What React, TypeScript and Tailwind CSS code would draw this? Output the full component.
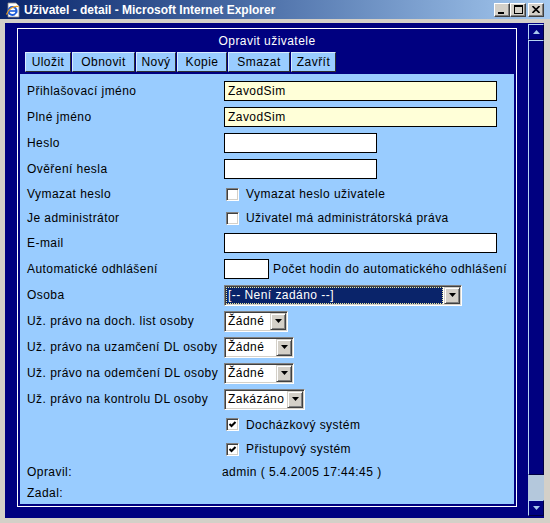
import React from "react";

function TextBox({ w, value, yellow = false }: { w: string; value?: string; yellow?: boolean }) {
  return (
    <div
      className={`${w} h-[20px] border border-black flex items-center pl-[3px] ${
        yellow ? "bg-[#ffffd8]" : "bg-white"
      }`}
    >
      {value}
    </div>
  );
}

function Check({ checked = false }: { checked?: boolean }) {
  return (
    <div className="ml-[2px] w-[13px] h-[13px] bg-white border border-t-[#808080] border-l-[#808080] border-r-white border-b-white shadow-[inset_1px_1px_0_#404040,inset_-1px_-1px_0_#d4d0c8] flex items-center justify-center shrink-0">
      {checked && (
        <svg width="9" height="9" viewBox="0 0 9 9">
          <path d="M1.5 4 L3.5 6 L7.5 2" fill="none" stroke="#000" strokeWidth="2" />
        </svg>
      )}
    </div>
  );
}

function DropButton() {
  return (
    <div className="w-[16px] h-full bg-[#d4d0c8] border border-t-[#d4d0c8] border-l-[#d4d0c8] border-r-[#404040] border-b-[#404040] shadow-[inset_1px_1px_0_#ffffff,inset_-1px_-1px_0_#808080] flex items-center justify-center shrink-0">
      <svg width="7" height="4" viewBox="0 0 7 4">
        <path d="M0 0 H7 L3.5 4 Z" fill="#000" />
      </svg>
    </div>
  );
}

function Select({ w, value, focused = false }: { w: string; value: string; focused?: boolean }) {
  return (
    <div
      className={`${w} h-[21px] p-[1px] bg-white border border-t-[#808080] border-l-[#808080] border-r-white border-b-white shadow-[inset_1px_1px_0_#404040,inset_-1px_-1px_0_#d4d0c8] flex`}
    >
      {focused ? (
        <div className="flex-1 bg-[#0a246a] text-white border border-dotted border-[#e8e8a0] flex items-center pl-[1px] mr-[1px]">
          {value}
        </div>
      ) : (
        <div className="flex-1 flex items-center pl-[2px] overflow-hidden whitespace-nowrap">{value}</div>
      )}
      <DropButton />
    </div>
  );
}

function Row({ label, h = "h-[26px]", children }: { label?: string; h?: string; children?: React.ReactNode }) {
  return (
    <div className={`flex items-center ${h}`}>
      <div className="w-[197px] shrink-0 whitespace-nowrap">{label}</div>
      <div className="flex items-center">{children}</div>
    </div>
  );
}

function CaptionButton({ children }: { children: React.ReactNode }) {
  return (
    <div className="w-[16px] h-[14px] bg-[#d4d0c8] border border-t-white border-l-white border-r-[#404040] border-b-[#404040] shadow-[inset_-1px_-1px_0_#808080] flex items-center justify-center">
      {children}
    </div>
  );
}

const tabs = [
  { t: "Uložit", w: "w-[46px]" },
  { t: "Obnovit", w: "w-[63px]" },
  { t: "Nový", w: "w-[40px]" },
  { t: "Kopie", w: "w-[50px]" },
  { t: "Smazat", w: "w-[62px]" },
  { t: "Zavřít", w: "w-[45px]" },
];

export default function App() {
  return (
    <div className="w-[550px] h-[523px] bg-[#d4d0c8] flex flex-col overflow-hidden font-['Liberation_Sans',Arial,sans-serif] text-[12px] text-black">
      {/* Title bar */}
      <div className="h-[19px] bg-gradient-to-r from-[#0a246a] to-[#a6caf0] flex items-center pl-[5px] pr-[6px] shrink-0">
        <svg width="16" height="16" viewBox="0 0 16 16" className="shrink-0">
          <path d="M3 1 H11 L14 4 V15 H3 Z" fill="#fff" stroke="#8a8a8a" strokeWidth="0.8" />
          <circle cx="7.5" cy="9" r="4" fill="none" stroke="#1c5cd8" strokeWidth="2.2" />
          <path d="M4 9 H11" stroke="#1c5cd8" strokeWidth="1.6" />
          <path d="M11 12 L12 13" stroke="#fff" strokeWidth="2" />
          <path d="M1.5 12.5 C3 7 9 3.5 13.5 4.5" fill="none" stroke="#f0a020" strokeWidth="1.2" />
        </svg>
        <span className="ml-[3px] text-white font-bold text-[12px] whitespace-nowrap">
          Uživatel - detail - Microsoft Internet Explorer
        </span>
        <div className="ml-auto flex items-center">
          <CaptionButton>
            <svg width="8" height="8" viewBox="0 0 8 8">
              <rect x="0" y="6" width="6" height="2" fill="#000" />
            </svg>
          </CaptionButton>
          <CaptionButton>
            <svg width="9" height="9" viewBox="0 0 9 9">
              <rect x="0.5" y="0.5" width="8" height="8" fill="none" stroke="#000" />
              <rect x="0" y="0" width="9" height="2" fill="#000" />
            </svg>
          </CaptionButton>
          <div className="w-[2px]" />
          <CaptionButton>
            <svg width="8" height="7" viewBox="0 0 8 7">
              <path d="M0.5 0 L7.5 7 M7.5 0 L0.5 7" stroke="#000" strokeWidth="1.6" />
            </svg>
          </CaptionButton>
        </div>
      </div>

      {/* Viewport */}
      <div className="mt-[4px] ml-[5px] mr-[6px] mb-[5px] flex-1 flex bg-[#000080] overflow-hidden tracking-[0.45px]">
        <div className="flex-1 pl-[12px] pr-[11px] pt-[5px] overflow-hidden">
          <div className="border border-white px-[2px] pb-[2px]">
            <div className="h-[23px] flex items-center justify-center text-white">Opravit uživatele</div>
            <div className="h-[20px] flex gap-[1px] ml-[5px]">
              {tabs.map((b) => (
                <div
                  key={b.t}
                  className={`${b.w} h-full bg-[#99ccff] border border-t-[#d8ecff] border-l-[#d8ecff] border-r-[#303030] border-b-[#303030] flex items-center justify-center`}
                >
                  {b.t}
                </div>
              ))}
            </div>
            <div className="mt-[2px] bg-[#99ccff] pt-[4px] pb-[1px] pl-[7px]">
              <Row label="Přihlašovací jméno">
                <TextBox w="w-[273px]" value="ZavodSim" yellow />
              </Row>
              <Row label="Plné jméno">
                <TextBox w="w-[273px]" value="ZavodSim" yellow />
              </Row>
              <Row label="Heslo">
                <TextBox w="w-[153px]" />
              </Row>
              <Row label="Ověření hesla">
                <TextBox w="w-[153px]" />
              </Row>
              <Row label="Vymazat heslo" h="h-[24px]">
                <Check />
                <span className="ml-[7px]">Vymazat heslo uživatele</span>
              </Row>
              <Row label="Je administrátor" h="h-[24px]">
                <Check />
                <span className="ml-[7px]">Uživatel má administrátorská práva</span>
              </Row>
              <Row label="E-mail">
                <TextBox w="w-[273px]" />
              </Row>
              <Row label="Automatické odhlášení">
                <TextBox w="w-[45px]" />
                <span className="ml-[4px] whitespace-nowrap">Počet hodin do automatického odhlášení</span>
              </Row>
              <Row label="Osoba">
                <Select w="w-[238px]" value="[-- Není zadáno --]" focused />
              </Row>
              <Row label="Už. právo na doch. list osoby">
                <Select w="w-[64px]" value="Žádné" />
              </Row>
              <Row label="Už. právo na uzamčení DL osoby">
                <Select w="w-[70px]" value="Žádné" />
              </Row>
              <Row label="Už. právo na odemčení DL osoby">
                <Select w="w-[70px]" value="Žádné" />
              </Row>
              <Row label="Už. právo na kontrolu DL osoby">
                <Select w="w-[81px]" value="Zakázáno" />
              </Row>
              <Row h="h-[25px]">
                <Check checked />
                <span className="ml-[7px]">Docházkový systém</span>
              </Row>
              <Row h="h-[24px]">
                <Check checked />
                <span className="ml-[7px]">Přistupový systém</span>
              </Row>
              <Row label="Opravil:" h="h-[21px]">
                <span className="-ml-[2px]">admin ( 5.4.2005 17:44:45 )</span>
              </Row>
              <Row label="Zadal:" h="h-[21px]" />
            </div>
          </div>
        </div>

        {/* Scrollbar */}
        <div className="w-[16px] mt-[1px] mb-[2px] flex flex-col bg-[#b4c8dc]">
          <div className="h-[16px] bg-[#000080] border border-t-[#b8d4f4] border-l-[#b8d4f4] border-r-[#000040] border-b-[#000040] flex items-center justify-center">
            <svg width="7" height="4" viewBox="0 0 7 4">
              <path d="M0 4 H7 L3.5 0 Z" fill="#a8c8ec" />
            </svg>
          </div>
          <div className="h-[435px] bg-[#000080] border border-t-[#b8d4f4] border-l-[#b8d4f4] border-r-[#000040] border-b-[#000040]" />
          <div className="flex-1" />
          <div className="h-[16px] bg-[#000080] border border-t-[#b8d4f4] border-l-[#b8d4f4] border-r-[#000040] border-b-[#000040] flex items-center justify-center">
            <svg width="7" height="4" viewBox="0 0 7 4">
              <path d="M0 0 H7 L3.5 4 Z" fill="#a8c8ec" />
            </svg>
          </div>
        </div>
      </div>
    </div>
  );
}
